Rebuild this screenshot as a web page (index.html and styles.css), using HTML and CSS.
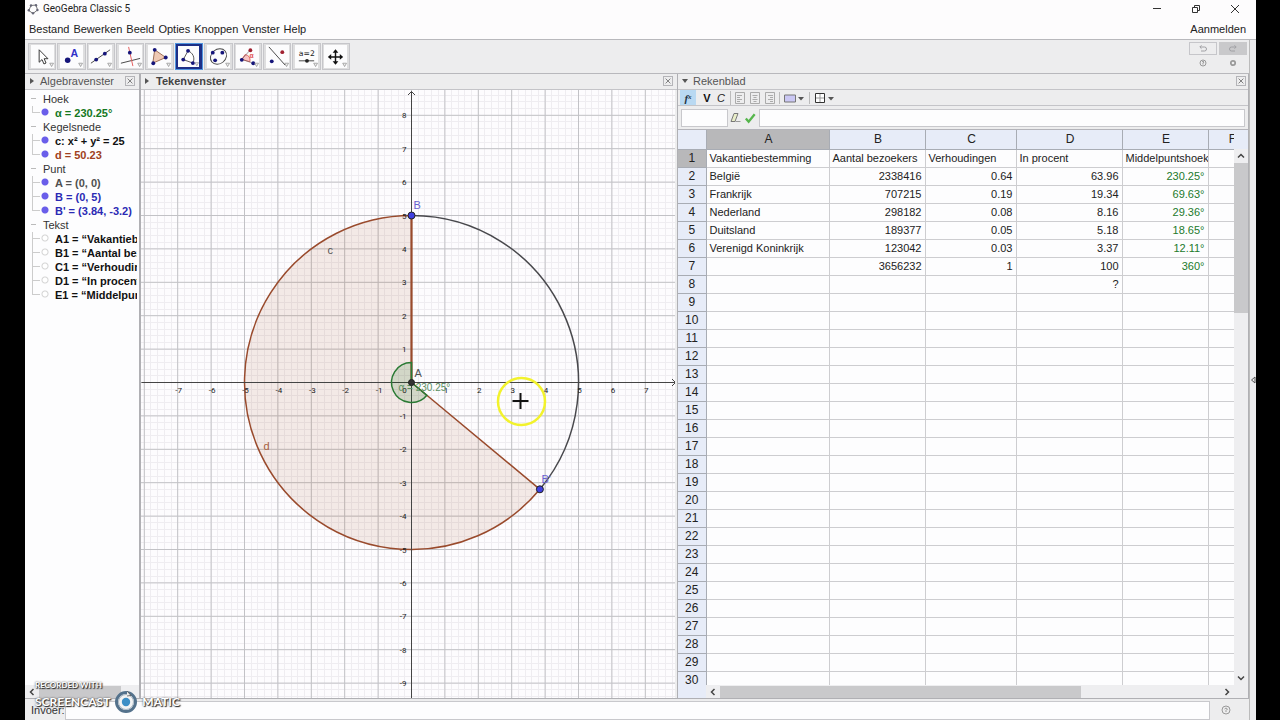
FILE: index.html
```html
<!DOCTYPE html>
<html lang="nl">
<head>
<meta charset="utf-8">
<title>GeoGebra Classic 5</title>
<link rel="stylesheet" href="styles.css">
</head>
<body>
<div class="app">
  <header class="titlebar">
    <svg class="logo" viewBox="0 0 12 12"><path d="M4 2.5 9 2 10.5 7 6 10.5 1.8 7.5Z" fill="none" stroke="#777" stroke-width="1"/><g fill="#667" ><circle cx="4" cy="2.5" r="1.2"/><circle cx="9" cy="2.2" r="1.2"/><circle cx="10.4" cy="7" r="1.2"/><circle cx="6" cy="10.2" r="1.2"/><circle cx="1.8" cy="7.2" r="1.2"/></g></svg>
    <h1 class="title">GeoGebra Classic 5</h1>
    <div class="window-buttons">
      <button class="winbtn" aria-label="Minimaliseren"><svg viewBox="0 0 10 10"><path d="M1 4.5h8"/></svg></button>
      <button class="winbtn" aria-label="Herstellen"><svg viewBox="0 0 10 10"><path d="M1.5 3.5h5v5h-5zM3.500 3.500v-2h5v5h-2"/></svg></button>
      <button class="winbtn" aria-label="Sluiten"><svg viewBox="0 0 10 10"><path d="M1 1l8 8M9 1l-8 8"/></svg></button>
    </div>
  </header>
  <nav class="menubar">
    <button>Bestand</button><button>Bewerken</button><button>Beeld</button><button>Opties</button><button>Knoppen</button><button>Venster</button><button>Help</button>
    <button class="login">Aanmelden</button>
  </nav>
  <div class="frame">
    <div class="workspace">
      <div class="toolbar">
        <div class="tools">
          <button class="tool" aria-label="Verplaatsen"><svg viewBox="0 0 24 24"><path d="M8.500 5v13l3-2.800 2 4.600 2.200-1-2-4.500h4z" fill="#fff" stroke="#333"/><path class="more" d="M19.500 19h4l-2 3.500z"/></svg></button>
          <button class="tool" aria-label="Punt"><svg viewBox="0 0 24 24"><circle cx="8" cy="16" r="2.900" fill="#15157a"/><text x="11" y="13" class="tool-a">A</text><path class="more" d="M19.500 19h4l-2 3.500z"/></svg></button>
          <button class="tool" aria-label="Lijn"><svg viewBox="0 0 24 24"><path d="M2 19 22 5" stroke="#444"/><circle cx="7.500" cy="15.200" r="2" fill="#15157a"/><circle cx="16.500" cy="9" r="2" fill="#15157a"/><path class="more" d="M19.500 19h4l-2 3.500z"/></svg></button>
          <button class="tool" aria-label="Loodlijn"><svg viewBox="0 0 24 24"><path d="M2 19 22 14" stroke="#444"/><path d="M10 2l4.500 20" stroke="#e45b5b"/><circle cx="11.300" cy="8" r="2" fill="#15157a"/><path class="more" d="M19.500 19h4l-2 3.500z"/></svg></button>
          <button class="tool" aria-label="Veelhoek"><svg viewBox="0 0 24 24"><path d="M7 5 18.500 13 5 19z" fill="#efc9b4" stroke="#9a6a50"/><circle cx="7" cy="5" r="2" fill="#15157a"/><circle cx="18.500" cy="13" r="2" fill="#15157a"/><circle cx="5.500" cy="19" r="2" fill="#15157a"/><path class="more" d="M19.500 19h4l-2 3.500z"/></svg></button>
          <button class="tool selected" aria-label="Cirkelsector"><svg viewBox="0 0 24 24"><path d="M11.500 5.500 6 15.500l11 4c3-6.500-.500-12-5.500-14z" fill="#fff" stroke="#444"/><circle cx="11.500" cy="5.500" r="2.200" fill="#15157a"/><circle cx="6" cy="15.500" r="2.200" fill="#15157a"/><circle cx="17" cy="19.500" r="2.200" fill="#15157a"/><path class="more" d="M19.500 19h4l-2 3.500z"/></svg></button>
          <button class="tool" aria-label="Kegelsnede"><svg viewBox="0 0 24 24"><ellipse cx="12" cy="12" rx="9" ry="7.500" transform="rotate(-40 12 12)" fill="none" stroke="#444"/><circle cx="6" cy="8" r="2" fill="#15157a"/><circle cx="16" cy="8" r="2" fill="#15157a"/><circle cx="8.500" cy="16" r="2" fill="#15157a"/><path class="more" d="M19.500 19h4l-2 3.500z"/></svg></button>
          <button class="tool" aria-label="Hoek"><svg viewBox="0 0 24 24"><path d="M6 15 9.500 10q6 1 5 7.500z" fill="#f7c4c4" stroke="#e06060"/><path d="M6 15l12 4M6 15l9-10" stroke="#555" stroke-width=".6"/><text x="14" y="14" class="tool-alpha">α</text><circle cx="15" cy="5.500" r="2" fill="#a02030"/><circle cx="6" cy="15.500" r="2" fill="#15157a"/><circle cx="18" cy="19" r="2" fill="#15157a"/><path class="more" d="M19.500 19h4l-2 3.500z"/></svg></button>
          <button class="tool" aria-label="Spiegelen"><svg viewBox="0 0 24 24"><path d="M3 2l17 19" stroke="#444"/><circle cx="17" cy="7.500" r="2" fill="#a02030"/><circle cx="6" cy="17" r="2" fill="#15157a"/><path class="more" d="M19.500 19h4l-2 3.500z"/></svg></button>
          <button class="tool" aria-label="Schuifknop"><svg viewBox="0 0 24 24"><text x="4" y="11.500" class="tool-eq">a=2</text><path d="M4 16.500h16" stroke="#444"/><circle cx="12.500" cy="16.500" r="2" fill="#222"/><path class="more" d="M19.500 19h4l-2 3.500z"/></svg></button>
          <button class="tool" aria-label="Tekenvenster verplaatsen"><svg viewBox="0 0 24 24"><path d="M12 6v13M5.500 12.500h13" stroke="#111" stroke-width="1.500"/><path d="M12 4.500l3 3.500H9zM12 20.500l3-3.500H9zM4 12.500 7.500 9.500v6zM20 12.500l-3.500-3v6z" fill="#111"/><path class="more" d="M19.500 19h4l-2 3.500z"/></svg></button>
        </div>
        <div class="history">
          <button class="undo" aria-label="Ongedaan maken"><svg viewBox="0 0 10 8"><path d="M2 2.500h4.500q2 0 2 2t-2 2H3M3.500.800 1.800 2.500l1.700 1.700"/></svg></button>
          <button class="redo" aria-label="Opnieuw"><svg viewBox="0 0 10 8"><path d="M8 2.500H3.500q-2 0-2 2t2 2H7M6.500.800l1.700 1.700-1.700 1.700"/></svg></button>
          <button class="mini" aria-label="Help"><svg viewBox="0 0 10 10"><circle cx="5" cy="5" r="3"/><path d="M4 4q1-1.500 2 0L5 5.200v1.300"/></svg></button>
          <button class="mini" aria-label="Voorkeuren"><svg viewBox="0 0 10 10"><circle cx="5" cy="5" r="2.200" stroke-width="1.700"/></svg></button>
        </div>
      </div>

      <main class="panels">
        <section class="panel algebra">
          <div class="panel-head"><svg class="tri" viewBox="0 0 6 6"><path d="M1 0l4 3-4 3z"/></svg><h2>Algebravenster</h2><button class="close" aria-label="Sluit algebravenster"><svg viewBox="0 0 10 10"><path d="M2 2l6 6M8 2l-6 6"/></svg></button></div>
          <div class="tree">
            <h3>Hoek</h3>
            <ul><li class="green">α = 230.25°</li></ul>
            <h3>Kegelsnede</h3>
            <ul><li>c: x² + y² = 25</li><li class="brown">d = 50.23</li></ul>
            <h3>Punt</h3>
            <ul><li class="grey">A = (0, 0)</li><li class="blue">B = (0, 5)</li><li class="blue">B' = (3.84, -3.2)</li></ul>
            <h3>Tekst</h3>
            <ul class="hidden-items"><li>A1 = “Vakantiebestemming”</li><li>B1 = “Aantal bezoekers”</li><li>C1 = “Verhoudingen”</li><li>D1 = “In procent”</li><li>E1 = “Middelpuntshoek”</li></ul>
          </div>
          <div class="hscroll"><button aria-label="Naar links"><svg viewBox="0 0 8 8"><path d="M5.500 1l-3 3 3 3"/></svg></button><span class="thumb"></span></div>
        </section>

        <section class="panel graphics">
          <div class="panel-head"><svg class="tri" viewBox="0 0 6 6"><path d="M1 0l4 3-4 3z"/></svg><h2 class="active">Tekenvenster</h2><button class="close" aria-label="Sluit tekenvenster"><svg viewBox="0 0 10 10"><path d="M2 2l6 6M8 2l-6 6"/></svg></button></div>
          <svg class="plot" viewBox="-270.5 -293 534 609" preserveAspectRatio="xMidYMid slice">
            <g id="grid"></g>
            <path class="sector" d="M0 0V-167A167 167 0 1 0 128.400 106.800Z"/>
            <path class="circle" d="M0-167A167 167 0 0 1 128.400 106.800"/>
            <path class="axis" d="M0 316V-291M-3.500-287.500 0-291 3.500-287.500M-270 0H264M260.500-3.500 264 0 260.500 3.500"/>
            <path class="radius" d="M0 0V-167"/>
            <path class="angle" d="M0 0V-20A20 20 0 1 0 15.400 12.800Z"/>
            <g id="ticks"></g>
            <text class="angle-label" x="-13" y="8">α = 230.25°</text>
            <text class="lbl dark" x="-84" y="-129">c</text>
            <text class="lbl orange" x="-148" y="67">d</text>
            <text class="lbl dark" x="3" y="-6">A</text>
            <text class="lbl violet" x="2" y="-174">B</text>
            <text class="lbl violet" x="130" y="100">B'</text>
            <circle class="pt" cx="0" cy="0" r="3" fill="#333"/>
            <circle class="pt" cx="0" cy="-167" r="3.500" fill="#4040e0"/>
            <circle class="pt" cx="128.400" cy="106.800" r="3.500" fill="#4040e0"/>
            <circle class="pointer-ring" cx="110" cy="19" r="23.500"/>
            <path class="pointer" d="M101 18.500h16M109 10.500v16"/>
          </svg>
        </section>

        <section class="panel sheet">
          <div class="panel-head"><svg class="tri" viewBox="0 0 6 6"><path d="M0 1h6l-3 4z"/></svg><h2>Rekenblad</h2><button class="close" aria-label="Sluit rekenblad"><svg viewBox="0 0 10 10"><path d="M2 2l6 6M8 2l-6 6"/></svg></button></div>
          <div class="formatbar">
            <button class="fx" aria-label="Invoerbalk">f<sub>x</sub></button>
            <button class="bold">V</button>
            <button class="italic">C</button>
            <button class="fmt" aria-label="Links uitlijnen"><svg viewBox="0 0 11 12"><path d="M.5.5h9v11h-9zM2 3.500h5M2 5.500h3M2 7.500h5M2 9.500h3"/></svg></button>
            <button class="fmt" aria-label="Centreren"><svg viewBox="0 0 11 12"><path d="M.5.5h9v11h-9zM2.500 3.500h5M3.500 5.500h3M2.500 7.500h5M3.500 9.500h3"/></svg></button>
            <button class="fmt" aria-label="Rechts uitlijnen"><svg viewBox="0 0 11 12"><path d="M.5.5h9v11h-9zM3 3.500h5M5 5.500h3M3 7.500h5M5 9.500h3"/></svg></button>
            <button class="wide" aria-label="Achtergrondkleur"><svg viewBox="0 0 20 12"><path d="M.5 3h11v7H.5z" fill="#cbc8f4" stroke="#777"/><path d="M14 5h6l-3 3.500z" fill="#555"/></svg></button>
            <button class="wide" aria-label="Randen"><svg viewBox="0 0 20 12"><path d="M1.500 1.500h9v9h-9z" fill="#fff" stroke="#333"/><path d="M6 2v8M2 6h8" stroke="#999"/><path d="M14 5h6l-3 3.500z" fill="#555"/></svg></button>
          </div>
          <div class="formulabar">
            <input class="cell-name" aria-label="Cel">
            <button aria-label="Wissen"><svg viewBox="0 0 12 12"><path d="M4.500 1.500h4l-3 8H1.500z" fill="#e8edc8" stroke="#777"/><path d="M6 9.500h5" stroke="#999"/></svg></button>
            <button aria-label="Toepassen"><svg viewBox="0 0 14 12"><path d="M2 6.500l3 3.500 6.500-8" fill="none" stroke="#55b54c" stroke-width="2.500"/></svg></button>
            <input class="cell-value" aria-label="Celinhoud">
          </div>
          <div class="gridwrap">
            <div class="cells">
              <table>
                <colgroup><col class="w-n"><col class="w-a"><col class="w-b"><col class="w-c"><col class="w-d"><col class="w-e"><col class="w-f"></colgroup>
                <thead><tr><th></th><th class="on">A</th><th>B</th><th>C</th><th>D</th><th>E</th><th>F</th></tr></thead>
                <tbody>
                <tr class="names"><th class="on">1</th><td>Vakantiebestemming</td><td>Aantal bezoekers</td><td>Verhoudingen</td><td>In procent</td><td>Middelpuntshoek</td><td></td></tr>
                <tr><th>2</th><td>België</td><td>2338416</td><td>0.64</td><td>63.96</td><td>230.25°</td><td></td></tr>
                <tr><th>3</th><td>Frankrijk</td><td>707215</td><td>0.19</td><td>19.34</td><td>69.63°</td><td></td></tr>
                <tr><th>4</th><td>Nederland</td><td>298182</td><td>0.08</td><td>8.16</td><td>29.36°</td><td></td></tr>
                <tr><th>5</th><td>Duitsland</td><td>189377</td><td>0.05</td><td>5.18</td><td>18.65°</td><td></td></tr>
                <tr><th>6</th><td>Verenigd Koninkrijk</td><td>123042</td><td>0.03</td><td>3.37</td><td>12.11°</td><td></td></tr>
                <tr><th>7</th><td></td><td>3656232</td><td>1</td><td>100</td><td>360°</td><td></td></tr>
                <tr><th>8</th><td></td><td></td><td></td><td>?</td><td></td><td></td></tr>
                <tr><th>9</th><td></td><td></td><td></td><td></td><td></td><td></td></tr>
                <tr><th>10</th><td></td><td></td><td></td><td></td><td></td><td></td></tr>
                <tr><th>11</th><td></td><td></td><td></td><td></td><td></td><td></td></tr>
                <tr><th>12</th><td></td><td></td><td></td><td></td><td></td><td></td></tr>
                <tr><th>13</th><td></td><td></td><td></td><td></td><td></td><td></td></tr>
                <tr><th>14</th><td></td><td></td><td></td><td></td><td></td><td></td></tr>
                <tr><th>15</th><td></td><td></td><td></td><td></td><td></td><td></td></tr>
                <tr><th>16</th><td></td><td></td><td></td><td></td><td></td><td></td></tr>
                <tr><th>17</th><td></td><td></td><td></td><td></td><td></td><td></td></tr>
                <tr><th>18</th><td></td><td></td><td></td><td></td><td></td><td></td></tr>
                <tr><th>19</th><td></td><td></td><td></td><td></td><td></td><td></td></tr>
                <tr><th>20</th><td></td><td></td><td></td><td></td><td></td><td></td></tr>
                <tr><th>21</th><td></td><td></td><td></td><td></td><td></td><td></td></tr>
                <tr><th>22</th><td></td><td></td><td></td><td></td><td></td><td></td></tr>
                <tr><th>23</th><td></td><td></td><td></td><td></td><td></td><td></td></tr>
                <tr><th>24</th><td></td><td></td><td></td><td></td><td></td><td></td></tr>
                <tr><th>25</th><td></td><td></td><td></td><td></td><td></td><td></td></tr>
                <tr><th>26</th><td></td><td></td><td></td><td></td><td></td><td></td></tr>
                <tr><th>27</th><td></td><td></td><td></td><td></td><td></td><td></td></tr>
                <tr><th>28</th><td></td><td></td><td></td><td></td><td></td><td></td></tr>
                <tr><th>29</th><td></td><td></td><td></td><td></td><td></td><td></td></tr>
                <tr><th>30</th><td></td><td></td><td></td><td></td><td></td><td></td></tr>
                </tbody>
              </table>
            </div>
            <div class="vscroll"><button aria-label="Omhoog"><svg viewBox="0 0 8 8"><path d="M1 5.500l3-3 3 3"/></svg></button><span class="thumb"></span><button class="end" aria-label="Omlaag"><svg viewBox="0 0 8 8"><path d="M1 2.500l3 3 3-3"/></svg></button></div>
            <div class="hscroll"><span class="corner"></span><button aria-label="Naar links"><svg viewBox="0 0 8 8"><path d="M5.500 1l-3 3 3 3"/></svg></button><span class="thumb"></span><button class="end" aria-label="Naar rechts"><svg viewBox="0 0 8 8"><path d="M2.500 1l3 3-3 3"/></svg></button></div>
          </div>
        </section>
      </main>

      <footer class="inputbar">
        <label for="invoer">Invoer:</label><input id="invoer">
        <button class="mini" aria-label="Invoerhulp"><svg viewBox="0 0 10 10"><circle cx="5" cy="5" r="4"/><path d="M3.500 4q1.500-2 3 0L5 5.500v1.500"/></svg></button>
      </footer>
    </div>
    <button class="sidebar-toggle" aria-label="Zijbalk"><svg viewBox="0 0 6 8"><path d="M5 1v6L1.500 4z"/></svg></button>
  </div>
</div>
<div class="watermark">
  <span class="wm-small">RECORDED WITH</span>
  <div class="wm-big"><span>SCREENCAST</span><svg viewBox="0 0 24 24"><circle cx="12" cy="12" r="9.500" fill="#e4e8ec" stroke="#54728c" stroke-width="3"/><circle cx="12" cy="12" r="7.500" fill="#f4f4f4" stroke="#aab8c4"/><circle cx="12" cy="12" r="4.200" fill="#3d8fc6"/><path d="M13 1l4 4.500-4 .500" fill="#eee" stroke="#444" stroke-width=".7"/></svg><span>MATIC</span></div>
</div>
<script src="plot.js"></script>
</body>
</html>
```
FILE: styles.css
```css
* { box-sizing: border-box; }
body { margin: 0; background: #000; color: #222; font: 11px/14px "Liberation Sans", Arial, sans-serif; overflow: hidden; }
button { font: inherit; color: inherit; background: none; border: 0; padding: 0; margin: 0; display: flex; align-items: center; justify-content: center; }
input { font: inherit; border: 1px solid #c8c8cc; background: #fdfdfe; min-width: 0; padding: 0 4px; }
h1, h2, h3, ul { margin: 0; padding: 0; font: inherit; list-style: none; }
svg { display: block; }

.app { height: 100vh; margin: 0 24px 0 25px; background: #fdfcfd; display: flex; flex-direction: column; }
.titlebar { height: 18px; display: flex; align-items: center; padding-left: 2px; flex: none; }
.logo { width: 12px; height: 12px; }
.title { font: 10px/18px Roboto, "Noto Sans", sans-serif; margin-left: 4px; color: #222; }
.window-buttons { margin-left: auto; display: flex; gap: 1px; padding-right: 2px; }
.winbtn { width: 38px; height: 18px; }
.winbtn svg { width: 10px; height: 10px; fill: none; stroke: #333; }
.menubar { height: 21px; flex: none; display: flex; align-items: center; gap: 4px; padding: 0 10px 0 4px; font-size: 11px; }
.login { margin-left: auto; }

.frame { flex: 1; min-height: 0; display: flex; border-top: 1px solid #b8b8bc; }
.workspace { flex: 1; min-width: 0; display: flex; flex-direction: column; background: #ededee; }
.sidebar-toggle { width: 7px; background: #ededef; border-left: 1px solid #bbb; }
.sidebar-toggle svg { width: 6px; height: 8px; fill: none; stroke: #555; }

.toolbar { height: 34px; flex: none; display: flex; justify-content: space-between; border-bottom: 1px solid #b8b8bc; padding: 2px 2px 2px 3px; }
.tools { display: grid; grid-template-columns: repeat(11, 1fr); gap: 1px; width: 322px; }
.tool { border: 1px solid #c6c6ca; background: #dededf; margin: 1px 0; }
.tool svg { width: 23px; height: 23px; background: #fcfcfd; fill: none; }
.tool .more { fill: #eee; stroke: #888; stroke-width: .7; }
.tool.selected { background: #1d2f86; border: 1px solid #4f94de; }
.tool.selected svg { width: 21px; height: 21px; }
.tool-a { font: bold 11px "Liberation Sans", sans-serif; fill: #3030c8; }
.tool-alpha { font: bold 7px "Liberation Sans", sans-serif; fill: #e05050; }
.tool-eq { font: 8px "DejaVu Sans", sans-serif; fill: #222; }
.history { display: grid; grid-template-columns: 28px 28px; grid-template-rows: 13px 14px; gap: 1px 2px; }
.history svg { width: 10px; height: 9px; fill: none; stroke: #a0a0a4; }
.undo { border: 1px solid #c6c6ca; }
.redo { background: #c9c9cb; }

.panels { flex: 1; min-height: 0; display: grid; grid-template-columns: 115px minmax(0, 538fr) minmax(0, 571fr); }
.panel { display: flex; flex-direction: column; min-height: 0; min-width: 0; border-right: 1px solid #b0b0b4; border-bottom: 1px solid #b0b0b4; }
.panel-head { height: 16px; flex: none; display: flex; align-items: center; padding: 0 4px 1px; border-bottom: 1px solid #c4c4c8; color: #555; }
.panel-head .tri { width: 6px; height: 6px; fill: #555; margin-right: 5px; }
.panel-head .active { font-weight: bold; color: #444; }
.close { width: 10px; height: 10px; border: 1px solid #b4b4b8; margin-left: auto; }
.close svg { width: 8px; height: 8px; stroke: #666; fill: none; }

.algebra { background: #fdfdfe; }
.algebra .panel-head { background: #ededee; }
.tree { flex: 1; min-height: 0; overflow: hidden; padding: 2px 0 0 4px; margin-right: 2px; white-space: nowrap; color: #222; }
.tree h3 { padding-left: 14px; color: #333; background: linear-gradient(#bbb, #bbb) 2px 6px / 5px 1px no-repeat; }
.tree ul { font-weight: bold; color: #111; }
.tree li { padding-left: 26px; height: 14px; background: radial-gradient(circle at 16px 6px, #6a5eea 3px, transparent 4px), linear-gradient(#ccc, #ccc) 3px 6px / 8px 1px no-repeat, linear-gradient(#ccc, #ccc) 3px 0 / 1px 14px no-repeat; }
.tree li:last-child { background: radial-gradient(circle at 16px 6px, #6a5eea 3px, transparent 4px), linear-gradient(#ccc, #ccc) 3px 6px / 8px 1px no-repeat, linear-gradient(#ccc, #ccc) 3px 0 / 1px 6px no-repeat; }
.tree .hidden-items li { background: radial-gradient(circle at 16px 6px, #fff 2px, #d4d4d4 3px, transparent 4px), linear-gradient(#ccc, #ccc) 3px 6px / 8px 1px no-repeat, linear-gradient(#ccc, #ccc) 3px 0 / 1px 14px no-repeat; }
.tree .hidden-items li:last-child { background: radial-gradient(circle at 16px 6px, #fff 2px, #d4d4d4 3px, transparent 4px), linear-gradient(#ccc, #ccc) 3px 6px / 8px 1px no-repeat, linear-gradient(#ccc, #ccc) 3px 0 / 1px 6px no-repeat; }
.tree .green { color: #14781e; }
.tree .brown { color: #a04020; }
.tree .grey { color: #505050; }
.tree .blue { color: #2a2ab4; }

.hscroll { height: 13px; flex: none; display: flex; align-items: center; background: #eeeef0; }
.hscroll button { width: 14px; }
.hscroll svg, .vscroll svg { width: 8px; height: 8px; fill: none; stroke: #444; stroke-width: 1.5; }
.hscroll .thumb { background: #c9c9cb; height: 12px; }
.algebra .hscroll .thumb { flex: 1; margin-right: 18px; }

.graphics { border-left: 1px solid #b0b0b4; }
.graphics .panel-head { padding-left: 3px; }
.graphics .panel-head .tri { margin-right: 6px; }
.plot { flex: 1; min-height: 0; margin-right: 2px; background: #fdfcfe; }
.minor { stroke: #efedf1; fill: none; shape-rendering: crispEdges; }
.major { stroke: #c2c2c6; fill: none; }
.axis { stroke: #444; fill: none; }
.sector { fill: #99330018; stroke: #994a2c; stroke-width: 1.5; }
.circle { fill: none; stroke: #48484c; stroke-width: 1.5; }
.radius { stroke: #994a2c; stroke-width: 2; }
.angle { fill: #00640022; stroke: #2a7a34; stroke-width: 1.5; }
.tick { font: 8px Roboto, "Liberation Sans", sans-serif; fill: #222; }
.tick-y { text-anchor: end; }
.tick-x { text-anchor: middle; }
.lbl, .angle-label { font: 11px "Liberation Sans", sans-serif; }
.angle-label { font-size: 10px; fill: #5a9062; }
.dark { fill: #555; }
.orange { fill: #a86040; }
.violet { fill: #6a62d0; }
.pt { stroke: #222; stroke-width: 1; }
.pointer-ring { fill: none; stroke: #f2f22c; stroke-width: 2.5; }
.pointer { stroke: #111; stroke-width: 2; }

.sheet .panel-head { padding-right: 2px; }
.formatbar { height: 16px; flex: none; display: flex; align-items: center; border-bottom: 1px solid #c4c4c8; padding-left: 2px; }
.fx { width: 16px; height: 15px; background: #b9d9f2; font: italic bold 11px/12px "Liberation Serif", serif; color: #234; }
.fx sub { font-size: 7px; line-height: 7px; }
.bold { width: 16px; font-weight: bold; color: #111; margin-left: 3px; }
.italic { width: 16px; font-style: italic; border-right: 1px solid #bbb; padding-right: 3px; margin-right: 2px; }
.fmt { width: 15px; }
.fmt svg { width: 11px; height: 12px; fill: none; stroke: #999; stroke-width: .8; }
.wide { width: 29px; border-left: 1px solid #bbb; margin-left: 1px; }
.wide svg { width: 20px; height: 12px; }
.formulabar { height: 24px; flex: none; display: flex; align-items: center; padding: 0 3px; border-bottom: 1px solid #b4b4ba; }
.formulabar input { height: 18px; }
.formulabar button { width: 15px; }
.formulabar svg { width: 13px; height: 12px; }
.cell-name { width: 47px; }
.cell-value { flex: 1; margin-left: 1px; }

.gridwrap { flex: 1; min-height: 0; display: grid; grid-template-columns: minmax(0, 1fr) 14px; grid-template-rows: minmax(0, 1fr) 13px; }
.cells { overflow: hidden; background: #fdfdfe; }
table { border-collapse: collapse; table-layout: fixed; width: 577px; }
.w-n { width: 28px; } .w-a { width: 123px; } .w-b { width: 96px; } .w-c { width: 91px; } .w-d { width: 106px; } .w-e { width: 86px; } .w-f { width: 47px; }
th, td { height: 18px; padding: 0 3px; border: 1px solid #cdcdd0; line-height: 14px; overflow: hidden; white-space: nowrap; text-align: right; }
th { background: #e7ecf8; border-color: #a8acb4; font-weight: normal; font-size: 12px; text-align: center; }
th:first-child { border-left: 0; }
thead th { height: 19px; border-top: 0; padding-left: 5px; }
.on { background: #b8b8ba; }
td:nth-child(2), .names td { text-align: left; }
td:nth-child(6) { color: #227a2c; }
.names td { color: #222; padding-right: 0; }
.vscroll { background: linear-gradient(#e7ecf8 19px, #eeeef0 19px); display: flex; flex-direction: column; padding-top: 19px; }
.vscroll button { height: 14px; }
.vscroll .thumb { height: 28%; background: #c9c9cb; }
.end { margin-left: auto; }
.vscroll .end { margin: auto 0 0; }
.sheet .hscroll { grid-column: 1 / -1; padding-right: 14px; }
.sheet .hscroll .corner { width: 28px; align-self: stretch; background: #e7ecf8; }
.sheet .hscroll .thumb { width: 65%; }

.inputbar { height: 21px; flex: none; display: flex; align-items: center; padding: 1px 18px 0 6px; color: #333; }
.inputbar input { flex: 1; height: 19px; margin: 0 11px 0 0; }
.mini svg { width: 10px; height: 10px; fill: none; stroke: #999; }

.watermark { position: absolute; left: 35px; bottom: 6px; font-family: "Lato", sans-serif; font-weight: bold; color: #fff; text-shadow: 1px 1px 1px #222, 0 0 2px #444; }
.wm-small { display: block; font-size: 8px; line-height: 9px; }
.wm-big { display: flex; align-items: center; gap: 4px; font-size: 12px; line-height: 24px; }
.wm-big svg { width: 24px; height: 24px; }
```
FILE: plot.js
```js
const UNIT = 33.4;
const NS = 'http://www.w3.org/2000/svg';
const grid = document.getElementById('grid');
const ticks = document.getElementById('ticks');

function add(parent, name, attrs, text) {
  const el = document.createElementNS(NS, name);
  for (const key in attrs) el.setAttribute(key, attrs[key]);
  if (text) el.textContent = text;
  parent.appendChild(el);
}

function lines(step, cls) {
  let d = '';
  for (let i = -Math.ceil(400 / step); i <= 400 / step; i++) {
    d += `M${i * step} -400V400M-400 ${i * step}H400`;
  }
  add(grid, 'path', { d, class: cls });
}

lines(UNIT / 5, 'minor');
lines(UNIT, 'major');

for (let n = -7; n <= 7; n++) {
  if (n) add(ticks, 'text', { x: n * UNIT + 1, y: 10, class: 'tick tick-x' }, String(n));
}
add(ticks, 'text', { x: -7, y: 10, class: 'tick tick-x' }, '0');
for (let n = -9; n <= 8; n++) {
  if (n) add(ticks, 'text', { x: -5, y: 3 - n * UNIT, class: 'tick tick-y' }, String(n));
}
```
